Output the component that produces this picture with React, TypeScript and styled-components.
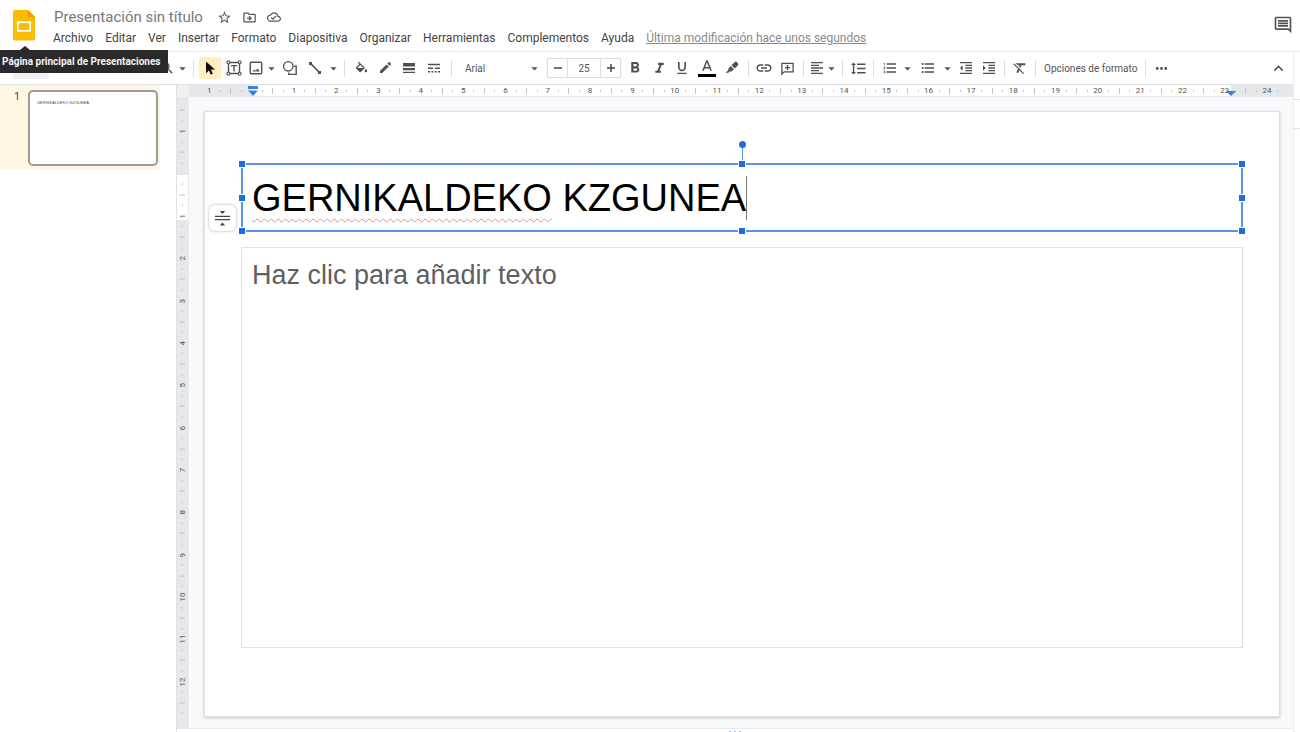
import React from "react";
import styled, { createGlobalStyle } from "styled-components";
import {
  MdArrowDropDown, MdEdit, MdFormatAlignLeft, MdFormatBold, MdFormatClear, MdFormatIndentDecrease,
  MdFormatIndentIncrease, MdFormatItalic, MdFormatLineSpacing, MdFormatListBulleted,
  MdFormatListNumbered, MdFormatUnderlined, MdInsertLink, MdKeyboardArrowUp,
  MdLineWeight, MdMoreHoriz, MdOutlineCloudDone, MdOutlineComment, MdOutlineDriveFileMove,
  MdSearch, MdStarBorder,
} from "react-icons/md";

const GlobalStyle = createGlobalStyle`
  *, *::before, *::after { box-sizing: border-box; }
  body { margin: 0; background: #fff; font-family: Roboto, sans-serif; color: #4a4a4a; }
  button, input, textarea { font: inherit; color: inherit; margin: 0; padding: 0; border: 0; background: none; outline: none; }
  button { cursor: pointer; }
`;

const Page = styled.div`
  display: flex;
  flex-direction: column;
  min-height: 100vh;
  overflow: hidden;
`;

const Header = styled.header`
  display: flex;
  align-items: flex-start;
  height: 52px;
  padding: 8px 7px 0 13px;
  border-bottom: 1px solid #ebecee;
`;

const HomeLink = styled.a`
  position: relative;
  display: block;
  width: 22px;
  height: 32px;
  margin: 2px 18px 0 0;
  svg { display: block; }
`;

const Tooltip = styled.span`
  position: absolute;
  z-index: 5;
  top: 40px;
  left: -13px;
  height: 23px;
  padding: 0 7px 0 2px;
  background: #2a2a2a;
  color: #f4f4f4;
  font-size: 10px;
  font-weight: 700;
  line-height: 23px;
  white-space: nowrap;
  &::before {
    content: "";
    position: absolute;
    left: 20px;
    bottom: 100%;
    border: 5px solid transparent;
    border-top: 0;
    border-bottom: 4px solid #2a2a2a;
  }
`;

const Heading = styled.div`
  flex: 1;
`;

const TitleRow = styled.div`
  display: flex;
  align-items: center;
  height: 18px;
  gap: 9px;
`;

const DocName = styled.input`
  width: 154px;
  height: 18px;
  padding-left: 1px;
  font-size: 15px;
  line-height: 18px;
  color: #777;
`;

const PlainButton = styled.button`
  display: flex;
  align-items: center;
  justify-content: center;
  width: 16px;
  height: 16px;
  color: #555;
`;

const MenuBar = styled.nav`
  display: flex;
  align-items: center;
  height: 24px;
  gap: 12px;
  font-size: 12px;
`;

const MenuItem = styled.button`
  line-height: 16px;
  color: #444;
`;

const LastEdit = styled.a`
  line-height: 16px;
  color: #8a8a8a;
  text-decoration: underline;
`;

const CommentsButton = styled(PlainButton)`
  width: 20px;
  height: 20px;
  margin-top: 7px;
`;

const Body = styled.div`
  display: flex;
  flex: 1;
`;

const Editor = styled.div`
  display: flex;
  flex-direction: column;
  flex: 1;
  min-width: 0;
`;

const SidePanel = styled.aside`
  width: 7px;
  border-left: 1px solid #ececee;
  padding-top: 47px;
  &::before {
    content: "";
    display: block;
    height: 30px;
    border: solid #e2e3e5;
    border-width: 1px 0;
  }
`;

const Toolbar = styled.div`
  display: flex;
  align-items: center;
  height: 33px;
  gap: 2px;
  padding-right: 4px;
  border-bottom: 1px solid #dfe1e5;
`;

const ToolbarStart = styled.div`
  display: flex;
  align-items: center;
  width: 188px;
  padding-left: 13px;
`;

const NewSlide = styled.button`
  width: 36px;
  height: 22px;
  margin-right: auto;
  border-radius: 2px;
  background: #f1f1f1;
`;

const Tool = styled.button<{ $w?: number; $on?: boolean }>`
  display: flex;
  align-items: center;
  justify-content: center;
  flex: none;
  width: ${(p) => p.$w ?? 22}px;
  height: 22px;
  border-radius: 2px;
  background: ${(p) => (p.$on ? "#feefc3" : "transparent")};
  color: #505050;
  svg { flex: none; }
`;

const Split = styled.div`
  display: flex;
`;

const Sep = styled.span`
  width: 1px;
  height: 17px;
  margin: 0 3px;
  background: #dcdde0;
`;

const FontPicker = styled.button`
  display: flex;
  align-items: center;
  justify-content: space-between;
  width: 88px;
  height: 22px;
  padding: 0 3px 0 8px;
  font-size: 10px;
  color: #555;
`;

const SizeBox = styled.div`
  display: flex;
  width: 74px;
  height: 20px;
  border: 1px solid #dcdde0;
  border-radius: 1px;
`;

const SizeStep = styled.button`
  display: flex;
  align-items: center;
  justify-content: center;
  width: 19px;
  color: #444;
`;

const SizeInput = styled.input`
  flex: 1;
  min-width: 0;
  border: solid #dcdde0;
  border-width: 0 1px;
  font-size: 10px;
  text-align: center;
  color: #555;
`;

const FormatOptions = styled.button`
  height: 22px;
  padding: 0 3px;
  font-size: 10px;
  color: #555;
  white-space: nowrap;
`;

const CollapseButton = styled(Tool)`
  margin-left: auto;
`;

const Workspace = styled.div`
  display: flex;
  flex: 1;
`;

const Filmstrip = styled.aside`
  width: 177px;
  border-right: 1px solid #dfe1e5;
`;

const FilmRow = styled.div`
  display: flex;
  align-items: flex-start;
  width: 160px;
  height: 84px;
  padding: 5px 2px 0 14px;
  gap: 6px;
  background: #fef7e3;
  font-size: 11px;
  line-height: 13px;
`;

const FilmNumber = styled.span`
  width: 8px;
`;

const Thumb = styled.button`
  display: flex;
  align-items: flex-start;
  flex: 1;
  height: 76px;
  padding: 8px 0 0 7px;
  border: 2px solid #9b9b9b;
  border-radius: 5px;
  background: #fff;
  font-family: "Liberation Sans", sans-serif;
  font-size: 4px;
  line-height: 6px;
  text-align: left;
`;

const Stage = styled.div`
  display: grid;
  grid-template-columns: 12px 1fr;
  grid-template-rows: 12px auto auto;
  flex: 1;
  min-width: 0;
  align-content: start;
`;

const Corner = styled.div`
  background: #eef0f2;
`;

const RulerH = styled.div`
  position: relative;
  display: grid;
  grid-template-columns: repeat(102, minmax(0, 1fr));
  padding: 0 10px 0 15px;
  background: linear-gradient(90deg, #e6e7eb 63px, #fff 63px, #fff calc(100% - 62px), #e6e7eb calc(100% - 62px));
  border-bottom: 1px solid #e9eaed;
`;

const RulerV = styled.div`
  display: grid;
  grid-template-rows: repeat(58, minmax(0, 1fr));
  padding: 8px 0 10px;
  background: linear-gradient(180deg, #e6e7eb 78px, #fff 78px, #fff 123px, #e6e7eb 123px);
  border-right: 1px solid #e9eaed;
`;

const Slot = styled.span<{ $vertical?: boolean }>`
  display: flex;
  align-items: center;
  justify-content: center;
  min-width: 0;
  min-height: 0;
  font-size: 8px;
  line-height: 10px;
  color: #555;
  writing-mode: ${(p) => (p.$vertical ? "vertical-rl" : "horizontal-tb")};
  transform: ${(p) => (p.$vertical ? "rotate(180deg)" : "none")};
`;

const Tick = styled.i<{ $long: boolean; $vertical?: boolean }>`
  flex: none;
  background: #c2c4c8;
  width: ${(p) => (p.$vertical ? (p.$long ? 6 : 2) : 1)}px;
  height: ${(p) => (p.$vertical ? 1 : p.$long ? 6 : 2)}px;
`;

const Indent = styled.svg<{ $side: "left" | "right" }>`
  position: absolute;
  top: 1px;
  ${(p) => (p.$side === "left" ? "left: 59px;" : "right: 57px;")}
`;

const Canvas = styled.main`
  padding: 14px 13px 11px 15px;
  background: #f8f9fb;
  border-bottom: 1px solid #e8eaec;
`;

const Slide = styled.section`
  position: relative;
  display: flex;
  flex-direction: column;
  aspect-ratio: 1076 / 606;
  padding: 51px 36px 68px;
  gap: 15px;
  border: 1px solid #dedfe2;
  background: #fff;
  box-shadow: 0 1px 3px rgba(60, 64, 67, 0.25);
`;

const TitleBox = styled.div`
  position: relative;
  height: 69px;
  padding: 10px 9px;
  border: 2px solid #5b93e6;
  font-family: "Liberation Sans", Arial, sans-serif;
  font-size: 38px;
  line-height: 46px;
  color: #000;
  white-space: nowrap;
`;

const Misspelled = styled.span`
  text-decoration: underline wavy #e88 1px;
  text-underline-offset: 7px;
  text-decoration-skip-ink: none;
`;

const TextCursor = styled.i`
  display: inline-block;
  width: 1px;
  height: 44px;
  vertical-align: -9px;
  background: #777;
`;

const Handle = styled.i<{ $x: number; $y: number }>`
  position: absolute;
  left: ${(p) => p.$x}%;
  top: ${(p) => p.$y}%;
  width: 8px;
  height: 8px;
  border: 1px solid #fff;
  background: #1a6fe0;
  transform: translate(-50%, -50%);
`;

const HandleLayer = styled.div`
  position: absolute;
  inset: -1px;
`;

const Rotator = styled.i`
  position: absolute;
  left: 50%;
  bottom: 100%;
  width: 1px;
  height: 20px;
  background: #5b93e6;
  &::before {
    content: "";
    position: absolute;
    left: -3px;
    top: -3px;
    width: 7px;
    height: 7px;
    border-radius: 50%;
    background: #1a6fe0;
  }
`;

const AutofitButton = styled.button`
  position: absolute;
  left: 4px;
  top: 93px;
  display: flex;
  align-items: center;
  justify-content: center;
  width: 27px;
  height: 26px;
  border-radius: 6px;
  background: #fff;
  box-shadow: 0 0 3px rgba(60, 64, 67, 0.45);
`;

const BodyBox = styled.textarea`
  display: block;
  flex: 1;
  width: 100%;
  padding: 11px 10px;
  border: 1px solid #dfe0e2;
  resize: none;
  font-family: "Liberation Sans", Arial, sans-serif;
  font-size: 27px;
  line-height: 32px;
  &::placeholder { color: #5f5f5f; opacity: 1; }
`;

const NotesHandle = styled.div`
  grid-column: 1 / -1;
  display: flex;
  justify-content: center;
  gap: 3px;
  padding-top: 2px;
  height: 3px;
  i { width: 2px; height: 1px; background: #a9c5ea; }
`;

const Caret = () => <MdArrowDropDown size={15} />;

const MenuTool = ({ label, w, children }: { label: string; w: number; children: React.ReactNode }) => (
  <Split>
    <Tool $w={w} aria-label={label}>{children}</Tool>
    <Tool $w={12} aria-label={`${label}: opciones`}><Caret /></Tool>
  </Split>
);

const Stroke = ({ size = 16, children }: { size?: number; children: React.ReactNode }) => (
  <svg width={size} height={size} viewBox="0 0 16 16" fill="none" stroke="currentColor" strokeWidth="1.4">
    {children}
  </svg>
);

const menus = ["Archivo", "Editar", "Ver", "Insertar", "Formato", "Diapositiva", "Organizar", "Herramientas", "Complementos", "Ayuda"];

// One slot per quarter of a centimetre; whole centimetres carry their number.
function marks(first: number, last: number, vertical?: boolean) {
  const out: React.ReactNode[] = [];
  for (let q = first; q <= last; q++) {
    const whole = q % 4 === 0;
    out.push(
      <Slot key={q} $vertical={vertical}>
        {whole ? (q === 0 ? null : Math.abs(q / 4)) : <Tick $vertical={vertical} $long={q % 2 === 0} />}
      </Slot>,
    );
  }
  return out;
}

const handles = [[0, 0], [50, 0], [100, 0], [0, 50], [100, 50], [0, 100], [50, 100], [100, 100]];

export default function App() {
  return (
    <>
      <GlobalStyle />
      <Page>
        <Header>
          <HomeLink href="#" aria-label="Página principal de Presentaciones">
            <svg width="22" height="31" viewBox="0 0 22 31">
              <path d="M2 0h13l7 7v21.500a2 2 0 0 1-2 2H2a2 2 0 0 1-2-2V2a2 2 0 0 1 2-2z" fill="#fbbc04" />
              <path d="M15 0l7 7h-5.500A1.500 1.500 0 0 1 15 5.500z" fill="#f29900" />
              <rect x="4.800" y="12.200" width="12.400" height="8.600" fill="none" stroke="#fff" strokeWidth="1.700" />
            </svg>
            <Tooltip role="tooltip">Página principal de Presentaciones</Tooltip>
          </HomeLink>
          <Heading>
            <TitleRow>
              <DocName aria-label="Nombre del documento" defaultValue="Presentación sin título" />
              <PlainButton aria-label="Destacar"><MdStarBorder size={15} /></PlainButton>
              <PlainButton aria-label="Mover"><MdOutlineDriveFileMove size={15} /></PlainButton>
              <PlainButton aria-label="Estado del documento"><MdOutlineCloudDone size={14} /></PlainButton>
            </TitleRow>
            <MenuBar>
              {menus.map((m) => <MenuItem key={m}>{m}</MenuItem>)}
              <LastEdit href="#">Última modificación hace unos segundos</LastEdit>
            </MenuBar>
          </Heading>
          <CommentsButton aria-label="Abrir historial de comentarios"><MdOutlineComment size={20} /></CommentsButton>
        </Header>
        <Body>
          <Editor>
            <Toolbar role="toolbar">
              <ToolbarStart>
                <NewSlide aria-label="Nueva diapositiva" />
                <MenuTool label="Zoom" w={18}><MdSearch size={16} /></MenuTool>
              </ToolbarStart>
              <Sep />
              <Tool $on aria-label="Seleccionar">
                <svg width="16" height="16" viewBox="0 0 16 16"><path d="M4 1.500v11.800l3-2.800 1.800 4.200 2-.9L9 9.700l4-.2z" fill="#111" /></svg>
              </Tool>
              <Tool aria-label="Cuadro de texto">
                <Stroke>
                  <path d="M2.500 2.500h11v11h-11zM5 5.600h6M8 5.600v6" />
                  <path d="M1 1h2.600v2.600H1zM12.400 1H15v2.600h-2.600zM1 12.400h2.600V15H1zM12.400 12.400H15V15h-2.600z" fill="#fff" strokeWidth="1" />
                </Stroke>
              </Tool>
              <MenuTool label="Insertar imagen" w={18}>
                <Stroke>
                  <rect x="2.300" y="2.300" width="11.400" height="11.400" rx="1" />
                  <path d="M4.600 11.500l1.700-2 1.400 1.200 1.900-2.200 2.200 3z" fill="currentColor" stroke="none" />
                </Stroke>
              </MenuTool>
              <Tool aria-label="Forma">
                <Stroke>
                  <circle cx="6.300" cy="6.300" r="4.700" />
                  <path d="M12.200 6.200h2v8.200H6.800v-2" />
                </Stroke>
              </Tool>
              <MenuTool label="Línea" w={24}>
                <Stroke>
                  <path d="M3 3l10 10" strokeWidth="1.700" />
                  <path d="M2 2h3v3H2zM11 11h3v3h-3z" fill="currentColor" stroke="none" />
                </Stroke>
              </MenuTool>
              <Sep />
              <Tool aria-label="Color de relleno">
                <svg width="15" height="15" viewBox="0 0 24 22" fill="currentColor">
                  <path d="M16.560 8.940L7.620 0 6.210 1.410l2.380 2.380-5.150 5.150c-.59.59-.59 1.540 0 2.120l5.500 5.500c.29.29.68.44 1.060.44s.77-.15 1.060-.44l5.500-5.500c.59-.58.59-1.530 0-2.120zM5.210 10L10 5.210 14.790 10H5.210zM19 11.500s-2 2.170-2 3.500c0 1.100.9 2 2 2s2-.9 2-2c0-1.330-2-3.500-2-3.500z" />
                </svg>
              </Tool>
              <Tool aria-label="Color del borde">
                <svg width="14" height="14" viewBox="0 0 14 14" fill="currentColor">
                  <path d="M2 9.800L8.600 3.400l2.200 2.200L4.200 12H2zM9.400 2.600l1.300-1.300a.8.8 0 0 1 1.100 0l1.100 1.100a.8.8 0 0 1 0 1.100l-1.300 1.300z" />
                </svg>
              </Tool>
              <Tool aria-label="Grosor del borde">
                <svg width="12" height="12" viewBox="0 0 12 12" fill="currentColor">
                  <path d="M0 1h12v3.500H0zM0 6h12v2.200H0zM0 9.800h12v1.200H0z" />
                </svg>
              </Tool>
              <Tool $w={24} aria-label="Guion del borde">
                <svg width="12" height="12" viewBox="0 0 12 12" stroke="currentColor" strokeWidth="1.500">
                  <path d="M0 2.500h12M0 6.300h5.200M6.800 6.300h5.200M0 9.800h2M3.300 9.800h2M6.700 9.800h2M10 9.800h2" />
                </svg>
              </Tool>
              <Sep />
              <FontPicker aria-label="Fuente">Arial<Caret /></FontPicker>
              <SizeBox>
                <SizeStep aria-label="Reducir tamaño">
                  <Stroke size={8}><path d="M0 8h16" strokeWidth="3" /></Stroke>
                </SizeStep>
                <SizeInput aria-label="Tamaño de fuente" defaultValue="25" />
                <SizeStep aria-label="Aumentar tamaño">
                  <Stroke size={8}><path d="M0 8h16M8 0v16" strokeWidth="3" /></Stroke>
                </SizeStep>
              </SizeBox>
              <Tool $w={24} aria-label="Negrita"><MdFormatBold size={18} /></Tool>
              <Tool $w={20} aria-label="Cursiva"><MdFormatItalic size={17} /></Tool>
              <Tool aria-label="Subrayado"><MdFormatUnderlined size={16} /></Tool>
              <Tool $w={24} aria-label="Color del texto">
                <svg width="18" height="18" viewBox="0 0 18 18">
                  <path transform="translate(0 -1) scale(.75)" d="M11 3L5.500 17h2.250l1.120-3h6.250l1.120 3h2.250L13 3h-2zm-1.380 9L12 5.670 14.380 12H9.620z" fill="currentColor" />
                  <path d="M0 15h18v3H0z" fill="#000" />
                </svg>
              </Tool>
              <Tool aria-label="Color de resaltado">
                <svg width="14" height="14" viewBox="0 0 14 14" fill="currentColor">
                  <path d="M9.600 1.200a1.600 1.600 0 0 1 2.300 0l.9.900a1.600 1.600 0 0 1 0 2.300L9.700 7.500 6.500 4.300zM5.700 5.100l3.200 3.200-2.300 2.100H4.700L3.400 11.800H.6l2.800-2.900V7.400z" />
                </svg>
              </Tool>
              <Sep />
              <Tool $w={20} aria-label="Insertar enlace"><MdInsertLink size={18} /></Tool>
              <Tool aria-label="Añadir comentario">
                <Stroke size={15}>
                  <path d="M2 14V2.500h12v9H4.500z" />
                  <path d="M8 4.300v5.400M5.300 7h5.400" />
                </Stroke>
              </Tool>
              <Sep />
              <MenuTool label="Alinear" w={16}><MdFormatAlignLeft size={16} /></MenuTool>
              <Sep />
              <Tool $w={20} aria-label="Interlineado"><MdFormatLineSpacing size={17} /></Tool>
              <Sep />
              <MenuTool label="Lista numerada" w={22}><MdFormatListNumbered size={16} /></MenuTool>
              <MenuTool label="Lista con viñetas" w={26}><MdFormatListBulleted size={16} /></MenuTool>
              <Tool aria-label="Reducir sangría"><MdFormatIndentDecrease size={16} /></Tool>
              <Tool $w={20} aria-label="Aumentar sangría"><MdFormatIndentIncrease size={16} /></Tool>
              <Sep />
              <Tool $w={20} aria-label="Borrar formato"><MdFormatClear size={16} /></Tool>
              <Sep />
              <FormatOptions>Opciones de formato</FormatOptions>
              <Sep />
              <Tool $w={20} aria-label="Más"><MdMoreHoriz size={17} /></Tool>
              <CollapseButton aria-label="Ocultar los menús"><MdKeyboardArrowUp size={19} /></CollapseButton>
            </Toolbar>
            <Workspace>
              <Filmstrip>
                <FilmRow>
                  <FilmNumber>1</FilmNumber>
                  <Thumb>GERNIKALDEKO KZGUNEA</Thumb>
                </FilmRow>
              </Filmstrip>
              <Stage>
                <Corner />
                <RulerH>
                  {marks(-4, 97)}
                  <Indent $side="left" width="10" height="10" viewBox="0 0 10 10" fill="#3d7ee0">
                    <path d="M0 0h10v3H0zM0 4.500h10L5 10z" />
                  </Indent>
                  <Indent $side="right" width="10" height="10" viewBox="0 0 10 10" fill="#3d7ee0">
                    <path d="M0 5h10L5 10z" />
                  </Indent>
                </RulerH>
                <RulerV>{marks(-6, 51, true)}</RulerV>
                <Canvas>
                  <Slide>
                    <TitleBox role="textbox" aria-label="Título">
                      <Misspelled>GERNIKALDEKO</Misspelled> KZGUNEA<TextCursor />
                      <HandleLayer>
                        <Rotator />
                        {handles.map(([x, y]) => <Handle key={`${x}-${y}`} $x={x} $y={y} />)}
                      </HandleLayer>
                    </TitleBox>
                    <BodyBox aria-label="Texto" placeholder="Haz clic para añadir texto" />
                    <AutofitButton aria-label="Opciones de autoajuste">
                      <svg width="15" height="16" viewBox="0 0 15 16" fill="#444">
                        <path d="M0 5.800h15v1.300H0zM0 9h15v1.300H0zM4.800 1h5.400L7.500 3.900zM4.800 15.500h5.400L7.500 12.600z" />
                      </svg>
                    </AutofitButton>
                  </Slide>
                </Canvas>
                <NotesHandle><i /><i /><i /></NotesHandle>
              </Stage>
            </Workspace>
          </Editor>
          <SidePanel />
        </Body>
      </Page>
    </>
  );
}
